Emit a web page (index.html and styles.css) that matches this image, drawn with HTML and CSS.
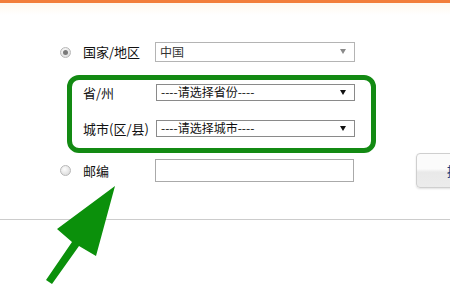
FILE: index.html
```html
<!DOCTYPE html>
<html lang="zh-CN">
<head>
  <meta charset="UTF-8" />
  <title>地址信息</title>
  <link rel="stylesheet" href="styles.css">
</head>
<body>
  <div class="topbar"></div>
  <div class="glow"></div>

  <form class="addr">
    <div class="row first">
      <span class="radio on"></span>
      <label>国家/地区</label>
      <div class="select light">中国<span class="caret"></span></div>
    </div>

    <div class="mark">
      <div class="row">
        <label>省/州</label>
        <div class="select">----请选择省份----<span class="caret"></span></div>
      </div>
      <div class="row">
        <label>城市(区/县)</label>
        <div class="select">----请选择城市----<span class="caret"></span></div>
      </div>
    </div>

    <div class="row zip">
      <span class="radio"></span>
      <label>邮编</label>
      <div class="input"></div>
      <button type="button" class="btn">提交</button>
    </div>
  </form>

  <div class="divider"></div>

  <!-- annotation arrow -->
  <svg class="arrow" width="450" height="300" viewBox="0 0 450 300">
    <polygon points="115,186 57,229 72,242 46,280 52,284 79,246 96,256" fill="#0b900b" />
  </svg>
</body>
</html>
```

FILE: styles.css
```css
body {
  margin: 0;
  width: 450px;
  height: 300px;
  overflow: hidden;
  position: relative;
  background: #fff;
  font-family: "Noto Sans CJK SC", "Noto Sans", sans-serif;
  color: #111;
}
.topbar {
  height: 3px;
  background: #f27e3a;
}
.glow {
  height: 12px;
  background: linear-gradient(#fff9ee, #fff);
}
.addr {
  padding: 27px 0 0 60px;
  margin: 0;
}
.row {
  display: flex;
  align-items: center;
}
.row > * {
  flex-shrink: 0;
}
.row label {
  width: 72px;
  font-size: 13px;
  line-height: 16px;
  white-space: nowrap;
}
.radio {
  width: 11px;
  height: 11px;
  margin: 0 12px 0 0;
  border: 1px solid #b8b8b8;
  border-radius: 50%;
  box-sizing: border-box;
  background: radial-gradient(circle at 40% 35%, #fdfdfd, #d4d4d4);
  display: flex;
  align-items: center;
  justify-content: center;
}
.radio.on::after {
  content: "";
  width: 5px;
  height: 5px;
  border-radius: 50%;
  background: #7a7a7a;
}
.select {
  position: relative;
  width: 200px;
  height: 20px;
  box-sizing: border-box;
  border: 1px solid #8a8a8a;
  padding-left: 4px;
  font-size: 12px;
  line-height: 17px;
  color: #111;
}
.select.light {
  border-color: #b4b4b4;
  color: #333;
}
.caret {
  position: absolute;
  right: 8px;
  top: 6px;
  border-left: 3px solid transparent;
  border-right: 3px solid transparent;
  border-top: 5px solid #111;
}
.select.light .caret {
  border-top-color: #8a8a8a;
}
.mark {
  margin: 13px 0 0 7px;
  width: 309px;
  box-sizing: border-box;
  border: 5px solid #138a13;
  border-radius: 12px;
  padding: 4px 0 11px 11px;
  display: flex;
  flex-direction: column;
  gap: 19px;
}
.mark label {
  width: 73px;
}
.mark .select {
  width: 199px;
  height: 17px;
  line-height: 14px;
}
.mark .caret {
  top: 5px;
}
.input {
  width: 199px;
  height: 23px;
  box-sizing: border-box;
  border: 1px solid #aaa;
}
.btn {
  margin-left: 62px;
  width: 60px;
  height: 35px;
  border: 1px solid #cfcfcf;
  border-radius: 4px;
  background: linear-gradient(#fbfbfb 45%, #e9e9e9 55%, #ececec);
  box-shadow: 0 1px 2px rgba(0,0,0,0.12);
  font-family: inherit;
  font-size: 13px;
  color: #1b3f7a;
  text-align: left;
  padding: 0 0 0 30px;
}
.divider {
  margin-top: 31px;
  height: 1px;
  background: #cccccc;
}
.arrow {
  position: absolute;
  left: 0;
  top: 0;
  pointer-events: none;
}
```
